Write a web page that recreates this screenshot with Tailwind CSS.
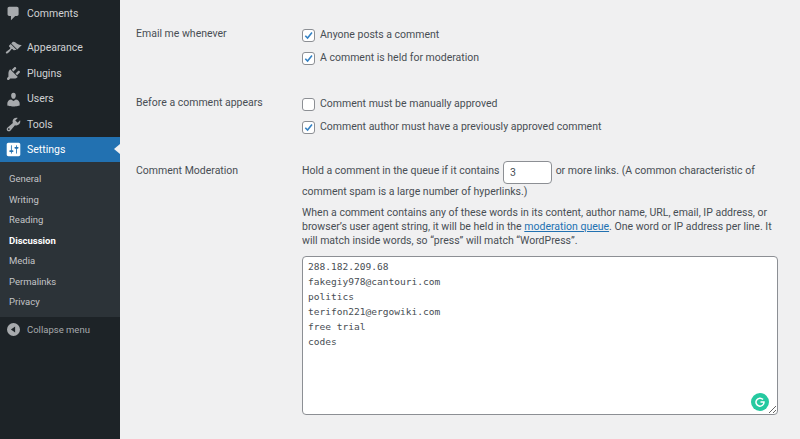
<!DOCTYPE html>
<html lang="en">
<head>
    <meta charset="UTF-8">
    <title>Discussion Settings</title>
    <script src="https://cdn.jsdelivr.net/npm/@tailwindcss/browser@4"></script>
</head>
<body class="bg-[#f0f0f1] overflow-hidden font-['Roboto',sans-serif] text-[10.500px] text-[#484e54]">
<div class="flex w-[800px] h-[439px] overflow-hidden">

    <!-- admin menu -->
    <aside class="w-[120px] shrink-0 bg-[#1d2327] text-[#cfd1d3] flex flex-col">
        <a class="flex items-center h-[27px] pl-[27px] relative">
            <svg class="absolute left-[5px] top-[5px] w-[17px] h-[17px] fill-[#a7aaad]" viewBox="0 0 20 20"><path d="M5 2h9c1.100 0 2 .9 2 2v7c0 1.100-.9 2-2 2h-2l-5 5v-5H5c-1.100 0-2-.9-2-2V4c0-1.100.9-2 2-2z"/></svg>
            Comments
        </a>
        <a class="flex items-center h-[25.500px] pl-[27px] relative mt-[8.500px]">
            <svg class="absolute left-[5px] top-[4px] w-[17px] h-[17px] fill-[#a7aaad]" viewBox="0 0 20 20"><path d="M14.480 11.060L7.410 3.990l1.500-1.500c.5-.56 2.300-.47 3.510.32 1.210.8 1.430 1.280 2.910 2.100 1.180.64 2.450 1.260 4.450.85zm-.71.71L6.700 4.700 4.930 6.470c-.39.39-.39 1.020 0 1.410l1.060 1.060c.39.39.39 1.030 0 1.420-.6.6-1.430 1.110-2.210 1.690-.35.26-.7.53-1.010.84C1.430 13.230.4 14.750 1.250 15.600c.84.84 2.370-.19 3.740-1.560.3-.31.57-.66.84-1.010.58-.78 1.090-1.610 1.690-2.210.39-.39 1.020-.39 1.410 0l1.060 1.060c.39.39 1.020.39 1.410 0z"/></svg>
            Appearance
        </a>
        <a class="flex items-center h-[25.500px] pl-[27px] relative">
            <svg class="absolute left-[5px] top-[4px] w-[17px] h-[17px] fill-[#a7aaad]" viewBox="0 0 20 20"><path d="M13.110 4.360L9.870 7.600 8 5.730l3.240-3.240c.35-.34 1.050-.2 1.560.32.52.51.66 1.210.31 1.550zm-8 1.770l.91-1.120 9.010 9.010-1.190.84c-.71.71-2.630 1.160-3.820 1.160H6.140L4.900 17.260c-.59.59-1.540.59-2.120 0-.59-.58-.59-1.530 0-2.120l1.240-1.240v-3.880c0-1.130.4-3.190 1.090-3.890zm7.260 3.970l3.240-3.240c.34-.35 1.040-.21 1.550.31.52.51.66 1.210.31 1.550l-3.240 3.250z"/></svg>
            Plugins
        </a>
        <a class="flex items-center h-[25.500px] pl-[27px] relative">
            <svg class="absolute left-[5px] top-[4px] w-[17px] h-[17px] fill-[#a7aaad]" viewBox="0 0 20 20"><path d="M10 9.250c-2.270 0-2.730-3.440-2.730-3.440C7 4.020 7.820 2 9.970 2c2.160 0 2.980 2.020 2.710 3.810 0 0-.41 3.440-2.680 3.440zm0 2.570L12.720 10c2.390 0 4.520 2.330 4.520 4.530v2.490s-3.650 1.130-7.240 1.130c-3.650 0-7.240-1.130-7.240-1.130v-2.490c0-2.250 1.940-4.480 4.470-4.480z"/></svg>
            Users
        </a>
        <a class="flex items-center h-[25px] pl-[27px] relative">
            <svg class="absolute left-[5px] top-[4px] w-[17px] h-[17px] fill-[#a7aaad]" viewBox="0 0 20 20"><path d="M16.680 9.770c-1.340 1.340-3.300 1.670-4.950.99l-5.410 6.520c-.99.99-2.590.99-3.580 0s-.99-2.590 0-3.570l6.520-5.420c-.68-1.650-.35-3.610.99-4.950 1.280-1.280 3.120-1.620 4.720-1.060l-2.890 2.890 2.820 2.820 2.860-2.870c.53 1.580.18 3.390-1.080 4.650zM3.810 16.210c.4.39 1.040.39 1.430 0 .4-.4.4-1.040 0-1.440-.39-.39-1.030-.39-1.430 0-.39.4-.39 1.040 0 1.440z"/></svg>
            Tools
        </a>
        <a class="flex items-center h-[25px] pl-[27px] relative bg-[#2271b1] text-white">
            <svg class="absolute left-[5px] top-[4px] w-[17px] h-[17px] fill-white" viewBox="0 0 20 20"><path d="M18 16V4c0-1.100-.9-2-2-2H4c-1.100 0-2 .9-2 2v12c0 1.100.9 2 2 2h12c1.100 0 2-.9 2-2zM8 11h1c.55 0 1 .45 1 1s-.45 1-1 1H8v1.500c0 .28-.22.5-.5.5s-.5-.22-.5-.5V13H6c-.55 0-1-.45-1-1s.45-1 1-1h1V5.500c0-.28.22-.5.5-.5s.5.22.5.5V11zm5-2h-1c-.55 0-1-.45-1-1s.45-1 1-1h1V5.500c0-.28.22-.5.5-.5s.5.22.5.5V7h1c.55 0 1 .45 1 1s-.45 1-1 1h-1v5.500c0 .28-.22.5-.5.5s-.5-.22-.5-.5V9z"/></svg>
            Settings
            <span class="absolute right-0 top-[7px] border-y-[5.500px] border-y-transparent border-r-[6px] border-r-[#f0f0f1]"></span>
        </a>
        <nav class="bg-[#2c3338] h-[155px] pt-[7px] pl-[9px] text-[9.500px] text-[#c3c4c7] flex flex-col">
            <a class="h-[20.500px] flex items-center">General</a>
            <a class="h-[20.500px] flex items-center">Writing</a>
            <a class="h-[20.500px] flex items-center">Reading</a>
            <a class="h-[20.500px] flex items-center font-bold text-white">Discussion</a>
            <a class="h-[20.500px] flex items-center">Media</a>
            <a class="h-[20.500px] flex items-center">Permalinks</a>
            <a class="h-[20.500px] flex items-center">Privacy</a>
        </nav>
        <a class="flex items-center h-[27px] pl-[27px] relative text-[9.500px] text-[#a7aaad]">
            <svg class="absolute left-[7px] top-[6px] w-[13px] h-[13px] fill-[#a7aaad]" viewBox="0 0 20 20"><path d="M10 20a10 10 0 1 1 0-20 10 10 0 0 1 0 20zm2.500-14.800L6 10l6.500 4.800z"/></svg>
            Collapse menu
        </a>
    </aside>

    <!-- settings form -->
    <main class="flex-1 pl-[16px] pt-[26px]">
        <div class="flex">
            <div class="w-[166px] leading-[16px]">Email me whenever</div>
            <div class="flex flex-col gap-[9px] pt-[2px]">
                <label class="flex items-center gap-[5px] h-[14px]">
                    <span class="w-[13px] h-[13px] rounded-[3px] border border-[#8c8f94] bg-white flex items-center justify-center">
                        <svg class="w-[11px] h-[11px]" viewBox="0 0 12 12"><path d="M2.500 6.200L5 8.800L9.800 2.800" fill="none" stroke="#3582c4" stroke-width="1.700"/></svg>
                    </span>
                    Anyone posts a comment
                </label>
                <label class="flex items-center gap-[5px] h-[14px]">
                    <span class="w-[13px] h-[13px] rounded-[3px] border border-[#8c8f94] bg-white flex items-center justify-center">
                        <svg class="w-[11px] h-[11px]" viewBox="0 0 12 12"><path d="M2.500 6.200L5 8.800L9.800 2.800" fill="none" stroke="#3582c4" stroke-width="1.700"/></svg>
                    </span>
                    A comment is held for moderation
                </label>
            </div>
        </div>
        <div class="flex mt-[30px]">
            <div class="w-[166px] leading-[16px]">Before a comment appears</div>
            <div class="flex flex-col gap-[9px] pt-[2px]">
                <label class="flex items-center gap-[5px] h-[14px]">
                    <span class="w-[13px] h-[13px] rounded-[3px] border border-[#8c8f94] bg-white"></span>
                    Comment must be manually approved
                </label>
                <label class="flex items-center gap-[5px] h-[14px]">
                    <span class="w-[13px] h-[13px] rounded-[3px] border border-[#8c8f94] bg-white flex items-center justify-center">
                        <svg class="w-[11px] h-[11px]" viewBox="0 0 12 12"><path d="M2.500 6.200L5 8.800L9.800 2.800" fill="none" stroke="#3582c4" stroke-width="1.700"/></svg>
                    </span>
                    Comment author must have a previously approved comment
                </label>
            </div>
        </div>
        <div class="flex mt-[29px]">
            <div class="w-[166px] leading-[16px]">Comment Moderation</div>
            <div class="w-[476px] -mt-[3px]">
                <p class="leading-[21px]">Hold a comment in the queue if it contains <input type="text" value="3" class="w-[49px] h-[23px] -my-[4px] mx-[1px] px-[6px] bg-white border border-[#8c8f94] rounded-[4px] align-[-2px]"> or more links. (A common characteristic of comment spam is a large number of hyperlinks.)</p>
                <p class="leading-[14px] mt-[4px]">When a comment contains any of these words in its content, author name, URL, email, IP address, or browser’s user agent string, it will be held in the <a class="text-[#2271b1] underline">moderation queue</a>. One word or IP address per line. It will match inside words, so “press” will match “WordPress”.</p>
                <div class="relative mt-[8px] h-[159px]">
                    <textarea class="block w-[476px] h-[159px] bg-white border border-[#8c8f94] rounded-[4px] px-[5px] pt-[2px] font-['DejaVu_Sans_Mono',monospace] text-[9.550px] leading-[15px] text-[#484e54]">288.182.209.68
fakegiy978@cantouri.com
politics
terifon221@ergowiki.com
free trial
codes</textarea>
                    <span class="absolute left-[449px] top-[137px] w-[18px] h-[18px] rounded-full bg-[#25c9a0] flex items-center justify-center">
                        <svg class="w-[12px] h-[12px]" viewBox="0 0 12 12"><path d="M9 3.500A4 4 0 1 0 10 6H6.500" fill="none" stroke="white" stroke-width="1.500"/></svg>
                    </span>
                </div>
            </div>
        </div>
    </main>
</div>
</body>
</html>
